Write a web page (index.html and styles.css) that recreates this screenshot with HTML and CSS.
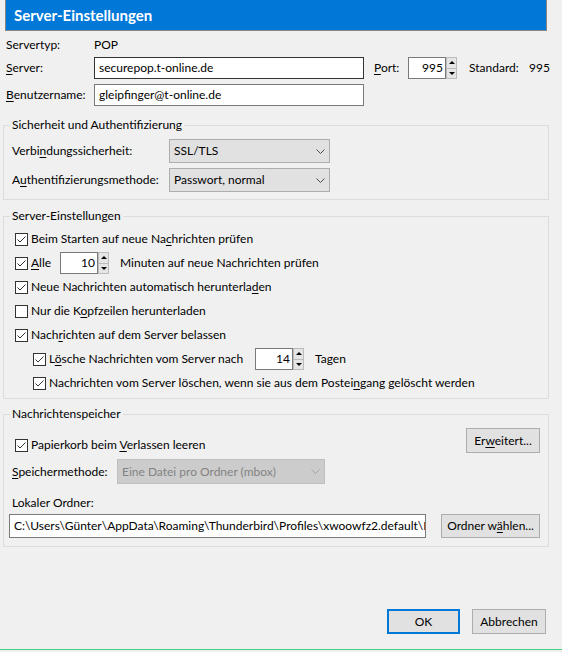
FILE: index.html
```html
<!DOCTYPE html>
<html lang="de">
<head>
<meta charset="utf-8">
<title>Server-Einstellungen</title>
<link rel="stylesheet" href="styles.css">
</head>
<body>
<svg class="defs" width="0" height="0" aria-hidden="true">
  <defs>
    <symbol id="chk-on" viewBox="0 0 13 13">
      <rect x="0.5" y="0.5" width="12" height="12" fill="#fff" stroke="#333"/>
      <path d="M2.5 6.5 5 9l5.5-5.5" fill="none" stroke="#333"/>
    </symbol>
    <symbol id="chk-off" viewBox="0 0 13 13">
      <rect x="0.5" y="0.5" width="12" height="12" fill="#fff" stroke="#333"/>
    </symbol>
    <symbol id="chev" viewBox="0 0 9 5">
      <path d="M0.5 0.5l4 4 4-4" fill="none" stroke="currentColor"/>
    </symbol>
  </defs>
</svg>

<div class="dialog">
  <div class="titlebar">Server-Einstellungen</div>

  <div class="account">
    <div class="acc-row acc-type">
      <span class="acc-label">Servertyp:</span>
      <span>POP</span>
    </div>
    <div class="acc-row acc-field">
      <span class="acc-label"><u>S</u>erver:</span>
      <div class="textbox textbox-dark host">securepop.t-online.de</div>
      <span class="port-label"><u>P</u>ort:</span>
      <div class="spin">
        <div class="textbox num port-num">995</div>
        <div class="spin-btns"><span class="spin-up"></span><span class="spin-down"></span></div>
      </div>
      <span class="std-label">Standard:</span>
      <span>995</span>
    </div>
    <div class="acc-row acc-field acc-user">
      <span class="acc-label"><u>B</u>enutzername:</span>
      <div class="textbox host">gleipfinger@t-online.de</div>
    </div>
  </div>

  <fieldset class="group group-security">
    <legend>Sicherheit und Authentifizierung</legend>
    <div class="sel-row">
      <span class="sel-label">Verbi<u>n</u>dungssicherheit:</span>
      <div class="select"><span>SSL/TLS</span><svg class="chev"><use href="#chev"/></svg></div>
    </div>
    <div class="sel-row sel-row-next">
      <span class="sel-label">A<u>u</u>thentifizierungsmethode:</span>
      <div class="select"><span>Passwort, normal</span><svg class="chev"><use href="#chev"/></svg></div>
    </div>
  </fieldset>

  <fieldset class="group group-server">
    <legend>Server-Einstellungen</legend>
    <div class="check">
      <svg class="cb"><use href="#chk-on"/></svg>
      <span>Beim Starten auf neue Na<u>c</u>hrichten prüfen</span>
    </div>
    <div class="check">
      <svg class="cb"><use href="#chk-on"/></svg>
      <span class="every-label"><u>A</u>lle</span>
      <div class="spin">
        <div class="textbox num">10</div>
        <div class="spin-btns"><span class="spin-up"></span><span class="spin-down"></span></div>
      </div>
      <span class="after-spin">Minuten auf neue Nachrichten prüfen</span>
    </div>
    <div class="check">
      <svg class="cb"><use href="#chk-on"/></svg>
      <span>Neue Nachrichten automatisch herunterla<u>d</u>en</span>
    </div>
    <div class="check">
      <svg class="cb"><use href="#chk-off"/></svg>
      <span>Nur die K<u>o</u>pfzeilen herunterladen</span>
    </div>
    <div class="check">
      <svg class="cb"><use href="#chk-on"/></svg>
      <span>Nach<u>r</u>ichten auf dem Server belassen</span>
    </div>
    <div class="check check-sub">
      <svg class="cb"><use href="#chk-on"/></svg>
      <span class="delete-label">L<u>ö</u>sche Nachrichten vom Server nach</span>
      <div class="spin">
        <div class="textbox num">14</div>
        <div class="spin-btns"><span class="spin-up"></span><span class="spin-down"></span></div>
      </div>
      <span class="after-spin">Tagen</span>
    </div>
    <div class="check check-sub">
      <svg class="cb"><use href="#chk-on"/></svg>
      <span>Nachrichten vom Server löschen, wenn sie aus dem Postei<u>n</u>gang gelöscht werden</span>
    </div>
  </fieldset>

  <fieldset class="group group-store">
    <legend>Nachrichtenspeicher</legend>
    <div class="store-top">
      <div class="check check-trash">
        <svg class="cb"><use href="#chk-on"/></svg>
        <span>Papierkorb beim <u>V</u>erlassen leeren</span>
      </div>
      <button class="btn btn-adv" type="button">Er<u>w</u>eitert...</button>
    </div>
    <div class="store-row">
      <span class="store-label"><u>S</u>peichermethode:</span>
      <div class="select select-disabled"><span>Eine Datei pro Ordner (mbox)</span><svg class="chev"><use href="#chev"/></svg></div>
    </div>
    <div class="folder-label">Lokaler Ordner:</div>
    <div class="folder-row">
      <div class="textbox path">C:\Users\Günter\AppData\Roaming\Thunderbird\Profiles\xwoowfz2.default\M</div>
      <button class="btn btn-folder" type="button">Ordner w<u>ä</u>hlen...</button>
    </div>
  </fieldset>

  <div class="actions">
    <button class="btn btn-ok" type="button">OK</button>
    <button class="btn btn-cancel" type="button">Abbrechen</button>
  </div>
</div>
</body>
</html>
```

FILE: styles.css
```css
* {
  box-sizing: border-box;
}

html,
body {
  margin: 0;
  padding: 0;
}

body {
  width: 562px;
  height: 652px;
  overflow: hidden;
  background: #f0f0f0;
  color: #000;
  font-family: Lato, "Noto Sans", sans-serif;
  font-size: 12px;
  line-height: 16px;
}

u {
  text-decoration-thickness: 1px;
  text-underline-offset: 2px;
}

.defs {
  position: absolute;
  width: 0;
  height: 0;
  overflow: hidden;
}

/* window frame */
.dialog {
  height: 650px;
  display: flex;
  flex-direction: column;
  border-bottom: 1px solid #3fd27f;
}

.titlebar {
  margin-left: 5px;
  width: 542px;
  height: 31px;
  flex: none;
  padding-left: 8px;
  background: #0078d7;
  border: 1px solid #858585;
  border-top: 0;
  color: #fff;
  font-size: 15px;
  font-weight: 700;
  line-height: 30px;
}

/* account block */
.account {
  padding: 4px 0 0 6px;
}

.acc-row {
  display: flex;
  align-items: center;
}

.acc-type {
  height: 20px;
}

.acc-field {
  height: 22px;
  margin-top: 2px;
}

.acc-user {
  margin-top: 5px;
}

.acc-label {
  width: 88px;
  flex: none;
}

.textbox {
  height: 22px;
  background: #fff;
  border: 1px solid #7a7a7a;
  padding: 0 4px;
  line-height: 20px;
  white-space: nowrap;
  overflow: hidden;
}

.textbox-dark {
  border-color: #333;
}

.host {
  width: 270px;
}

.port-label {
  width: 34px;
  margin-left: 10px;
}

.std-label {
  width: 60px;
  margin-left: 12px;
}

/* spin box: number field with up/down buttons */
.spin {
  display: flex;
  flex: none;
  height: 22px;
}

.num {
  width: 38px;
  padding: 0 2px 0 0;
  text-align: right;
}

.spin-btns {
  width: 11px;
  height: 22px;
  display: flex;
  flex-direction: column;
}

.spin-up,
.spin-down {
  flex: 1;
  display: flex;
  align-items: center;
  justify-content: center;
  background: #e5e5e5;
  border: 1px solid #bcbcbc;
}

.spin-down {
  border-top: 0;
}

.spin-up::before,
.spin-down::before {
  content: "";
  width: 0;
  height: 0;
  border-left: 3px solid transparent;
  border-right: 3px solid transparent;
}

.spin-up::before {
  border-bottom: 3px solid #000;
}

.spin-down::before {
  border-top: 3px solid #000;
}

/* group boxes */
.group {
  width: 546px;
  margin: 11px 0 0 3px;
  padding: 0 8px 7px 8px;
  border: 1px solid #dcdcdc;
  min-width: 0;
}

.group legend {
  padding: 0 2px;
  margin-left: -2px;
  line-height: 16px;
}

.group-server {
  margin-top: 8px;
  padding-top: 3px;
  padding-bottom: 3px;
}

.group-store {
  margin-top: 7px;
  padding-bottom: 8px;
}

.sel-row {
  display: flex;
  align-items: center;
  height: 24px;
  margin-top: 6px;
}

.sel-row-next {
  margin-top: 5px;
}

.sel-label {
  width: 157px;
  flex: none;
}

.select {
  width: 161px;
  height: 24px;
  display: flex;
  align-items: center;
  justify-content: space-between;
  padding: 0 4px 0 4px;
  background: #e1e1e1;
  border: 1px solid #adadad;
  color: #000;
}

.chev {
  width: 9px;
  height: 5px;
  color: #4d4d4d;
}

.select-disabled {
  width: 208px;
  height: 25px;
  background: #cccccc;
  border-color: #bfbfbf;
  color: #838383;
}

.select-disabled .chev {
  color: #a6a6a6;
}

/* check boxes */
.check {
  display: flex;
  align-items: center;
  height: 24px;
  margin-left: 3px;
}

.check-sub {
  margin-left: 21px;
}

.cb {
  width: 13px;
  height: 13px;
  flex: none;
  margin-right: 3px;
}

.every-label {
  width: 29px;
}

.delete-label {
  width: 206px;
}

.after-spin {
  margin-left: 11px;
}

/* message store */
.store-top {
  display: flex;
  justify-content: space-between;
  height: 25px;
  margin-top: 6px;
}

.check-trash {
  align-self: flex-end;
  height: 16px;
}

.store-row {
  display: flex;
  align-items: center;
  margin-top: 6px;
}

.store-label {
  width: 105px;
  flex: none;
}

.folder-label {
  margin-top: 11px;
}

.folder-row {
  display: flex;
  margin: 3px 0 0 -3px;
}

.path {
  width: 417px;
  height: 24px;
  line-height: 22px;
}

.btn {
  height: 25px;
  padding: 0;
  background: #e1e1e1;
  border: 1px solid #adadad;
  border-radius: 0;
  color: #000;
  font: inherit;
  text-align: center;
}

.btn-adv {
  width: 74px;
}

.btn-folder {
  width: 99px;
  height: 24px;
  margin-left: auto;
}

/* dialog buttons */
.actions {
  margin-top: auto;
  display: flex;
  justify-content: flex-end;
  gap: 12px;
  padding: 0 16px 15px 0;
}

.btn-ok {
  width: 73px;
  border: 2px solid #0078d7;
}

.btn-cancel {
  width: 74px;
}
```
